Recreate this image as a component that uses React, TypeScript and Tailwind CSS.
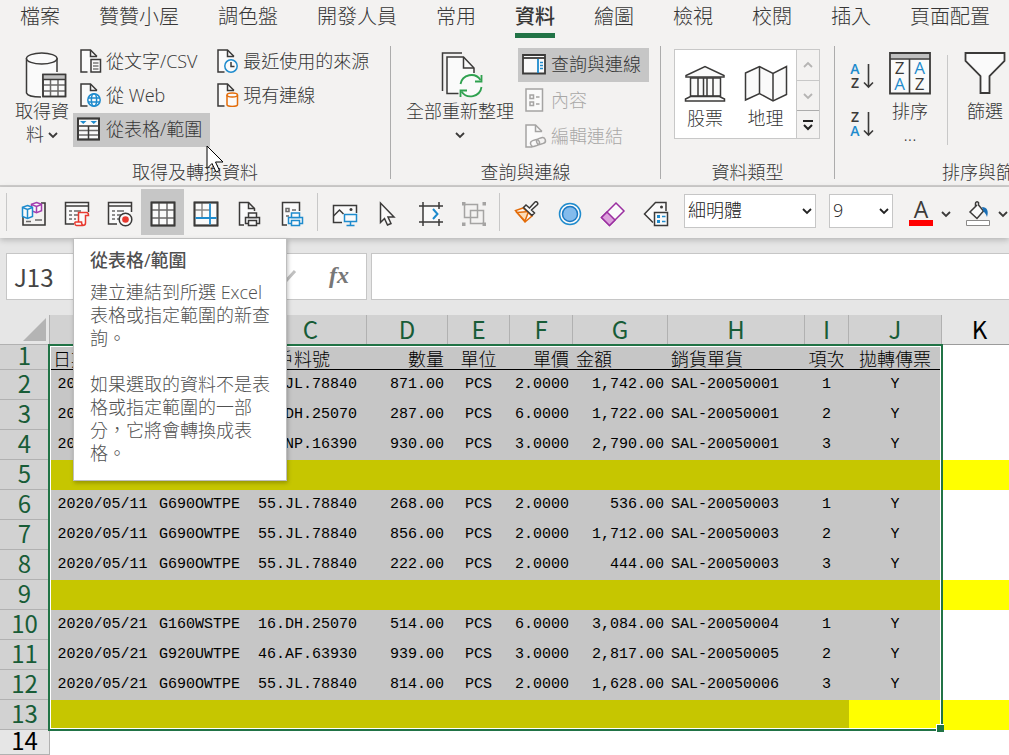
import { type ReactNode } from "react";
import { clsx } from "clsx";

const INK = "#3b3a39";
const BLUE = "#1e8bcd";
const PAPER = "#fafafa";

const tabs = [
  "檔案",
  "贊贊小屋",
  "調色盤",
  "開發人員",
  "常用",
  "資料",
  "繪圖",
  "檢視",
  "校閱",
  "插入",
  "頁面配置",
];

type Align = "left" | "center" | "right";

interface Column {
  key: string;
  width: string;
  align: Align;
  title: string;
  titleAlign?: Align;
}

const columns: Column[] = [
  { key: "A", width: "w-[106px]", align: "center", title: "日期", titleAlign: "left" },
  { key: "B", width: "w-[99px]", align: "left", title: "客戶", titleAlign: "left" },
  { key: "C", width: "w-[112px]", align: "left", title: "客戶料號" },
  { key: "D", width: "w-[81px]", align: "right", title: "數量" },
  { key: "E", width: "w-[62px]", align: "center", title: "單位" },
  { key: "F", width: "w-[63px]", align: "right", title: "單價" },
  { key: "G", width: "w-[95px]", align: "right", title: "金額", titleAlign: "left" },
  { key: "H", width: "w-[137px]", align: "left", title: "銷貨單貨" },
  { key: "I", width: "w-[44px]", align: "center", title: "項次" },
  { key: "J", width: "w-[93px]", align: "center", title: "拋轉傳票" },
];

// null is a blank separator row
const rows: (string[] | null)[] = [
  ["2020/05/01", "G690OWTPE", "55.JL.78840", "871.00", "PCS", "2.0000", "1,742.00", "SAL-20050001", "1", "Y"],
  ["2020/05/01", "G160WSTPE", "16.DH.25070", "287.00", "PCS", "6.0000", "1,722.00", "SAL-20050001", "2", "Y"],
  ["2020/05/01", "G920UWTPE", "46.NP.16390", "930.00", "PCS", "3.0000", "2,790.00", "SAL-20050001", "3", "Y"],
  null,
  ["2020/05/11", "G690OWTPE", "55.JL.78840", "268.00", "PCS", "2.0000", "536.00", "SAL-20050003", "1", "Y"],
  ["2020/05/11", "G690OWTPE", "55.JL.78840", "856.00", "PCS", "2.0000", "1,712.00", "SAL-20050003", "2", "Y"],
  ["2020/05/11", "G690OWTPE", "55.JL.78840", "222.00", "PCS", "2.0000", "444.00", "SAL-20050003", "3", "Y"],
  null,
  ["2020/05/21", "G160WSTPE", "16.DH.25070", "514.00", "PCS", "6.0000", "3,084.00", "SAL-20050004", "1", "Y"],
  ["2020/05/21", "G920UWTPE", "46.AF.63930", "939.00", "PCS", "3.0000", "2,817.00", "SAL-20050005", "2", "Y"],
  ["2020/05/21", "G690OWTPE", "55.JL.78840", "814.00", "PCS", "2.0000", "1,628.00", "SAL-20050006", "3", "Y"],
  null,
];

const alignClass: Record<Align, string> = {
  left: "text-left",
  center: "text-center",
  right: "text-right",
};

/* ---------- icons ---------- */

function Svg({ w, h, children, stroke = INK }: { w: number; h: number; children: ReactNode; stroke?: string }) {
  return (
    <svg
      width={w}
      height={h}
      viewBox={`0 0 ${w} ${h}`}
      fill="none"
      stroke={stroke}
      strokeWidth="1.5"
      className="shrink-0"
      aria-hidden="true"
    >
      {children}
    </svg>
  );
}

function Chevron({ up = false, color = INK }: { up?: boolean; color?: string }) {
  return (
    <Svg w={10} h={8} stroke={color}>
      <path d={up ? "M1 6l4-4 4 4" : "M1 2l4 4 4-4"} strokeWidth="1.8" />
    </Svg>
  );
}

function DocBase({ color = INK }: { color?: string }) {
  return (
    <>
      <path d="M12 22.5H5V1h10l6 6v5" fill={PAPER} stroke="none" />
      <path d="M11.500 23H5V1h9.500l6.500 6.500" stroke={color} />
      <path d="M14.500 1v6.500H21" stroke={color} />
    </>
  );
}

function DocTextIcon() {
  return (
    <Svg w={28} h={24}>
      <DocBase />
      <path d="M15 10.500h9.500V23H15z" fill={PAPER} />
      <path d="M17 14h5.500M17 17h5.500M17 20h5.500" strokeWidth="1" />
    </Svg>
  );
}

function DocWebIcon() {
  return (
    <Svg w={28} h={24}>
      <DocBase />
      <circle cx="18" cy="17" r="6.200" fill={PAPER} stroke={BLUE} />
      <ellipse cx="18" cy="17" rx="2.600" ry="6.200" stroke={BLUE} />
      <path d="M12 15h12M12 19h12" stroke={BLUE} />
    </Svg>
  );
}

function DocClockIcon() {
  return (
    <Svg w={28} h={24}>
      <DocBase />
      <circle cx="18" cy="17" r="6.200" fill={PAPER} stroke={BLUE} />
      <path d="M18 13v4.500h3.500" />
    </Svg>
  );
}

function DocDatabaseIcon() {
  return (
    <Svg w={28} h={24}>
      <DocBase />
      <path d="M14 12v9.500c0 2.500 10.500 2.500 10.500 0V12" fill={PAPER} stroke="#e36c09" />
      <ellipse cx="19.250" cy="12" rx="5.250" ry="2" fill={PAPER} stroke="#e36c09" />
    </Svg>
  );
}

function TableRangeIcon() {
  return (
    <Svg w={28} h={24}>
      <path d="M2 1.500h21v21H2z" fill={PAPER} />
      <path d="M2 13.500h21M2 18h21" stroke="#6b6a69" />
      <path d="M2 9h21M12.500 9v13" />
      <path d="M2 1.500h21v21H2z" strokeWidth="2" />
      <path d="M4 4h6.500l-3.250 3zM14.500 4H21l-3.250 3z" fill={BLUE} stroke="none" />
    </Svg>
  );
}

function QueriesIcon() {
  return (
    <Svg w={28} h={24}>
      <path d="M2 3h22v18.500H2z" fill={PAPER} strokeWidth="1.800" />
      <path d="M2 6h22" strokeWidth="1.800" />
      <path d="M17 7v14" stroke={BLUE} strokeWidth="1.800" />
      <path d="M19 10.500h3M19 13.500h3M19 16.500h3" stroke={BLUE} />
    </Svg>
  );
}

function PropertiesIcon() {
  return (
    <Svg w={28} h={24} stroke="#a5a4a3">
      <path d="M5 1h16.500v22H5z" fill={PAPER} />
      <path d="M9 7h3.500v3.500H9zM9 14h3.500v3.500H9zM15 9h3.500M15 16h3.500" />
    </Svg>
  );
}

function EditLinksIcon() {
  return (
    <Svg w={28} h={24} stroke="#a5a4a3">
      <DocBase color="#a5a4a3" />
      <rect x="9.500" y="16" width="9" height="6" rx="3" transform="rotate(-18 14 19)" />
      <rect x="15.500" y="14" width="9" height="6" rx="3" transform="rotate(-18 20 17)" />
    </Svg>
  );
}

function GetDataIcon() {
  return (
    <Svg w={42} h={46}>
      <path d="M1.500 6v35c1 3 8 4 15 4V22H32V6" fill={PAPER} stroke="none" />
      <path d="M1.500 6v35c1 3 7 4 14.500 4M32 6v14" />
      <ellipse cx="16.750" cy="6.500" rx="15.250" ry="5.500" fill={PAPER} />
      <path d="M18 22.500h22.500v22H18z" fill={PAPER} />
      <path d="M18 23h22v4H18z" fill="#c0c0c0" stroke="none" />
      <path d="M18 33h22.500M18 39h22.500M25.500 27.500v17M33 27.500v17" stroke="#6b6a69" />
      <path d="M18 27.500h22.500M18 22.500h22.500v22H18z" />
    </Svg>
  );
}

function RefreshAllIcon() {
  return (
    <Svg w={42} h={46}>
      <path d="M1.500 39V1H21" />
      <path d="M6 41.500V5h16l10.500 11V24l-14 17.500z" fill={PAPER} stroke="none" />
      <path d="M17.500 41.500H6V5h16.500l10.500 11v5" />
      <path d="M22.500 5v11H33" />
      <circle cx="30" cy="34" r="10.500" fill={PAPER} stroke="none" />
      <path d="M19.500 32a11 11 0 0 1 20-4M40.500 35a11 11 0 0 1-20 4.500" stroke="#2fa14f" strokeWidth="1.800" />
      <path d="M40.500 23v6.500H34M19.500 45v-6.500H26" stroke="#2fa14f" strokeWidth="1.800" />
    </Svg>
  );
}

function StocksIcon() {
  return (
    <Svg w={42} h={38}>
      <path d="M2 12v-1.500L21 1.500l19 9V12z" fill={PAPER} />
      <path d="M6.500 13h30v18h-30z" fill={PAPER} />
      <path d="M14 13v18M19.500 13v18M23 13v18M29 13v18" />
      <path d="M1.500 36v-2l5-2.500h29l5 2.500v2z" fill={PAPER} />
    </Svg>
  );
}

function GeographyIcon() {
  return (
    <Svg w={44} h={38}>
      <path d="M1.500 8L15.500 1.500l13.500 7 13.500-7v28L29 36 15.500 28.500 1.500 35z" fill={PAPER} />
      <path d="M15.500 1.500v27M29 8.500V36" />
    </Svg>
  );
}

function SortArrowIcon({ top, bottom }: { top: string; bottom: string }) {
  return (
    <svg width="28" height="28" viewBox="0 0 28 28" className="overflow-visible" aria-hidden="true">
      <g fontFamily="Open Sans, sans-serif" fontSize="14" fontWeight="600" textAnchor="middle">
        <text x="6" y="12" fill={top === "A" ? BLUE : INK}>{top}</text>
        <text x="6" y="26" fill={bottom === "A" ? BLUE : INK}>{bottom}</text>
      </g>
      <path d="M19.500 2v23M15 20.500l4.500 4.500 4.500-4.500" fill="none" stroke={INK} strokeWidth="1.600" />
    </svg>
  );
}

function SortDialogIcon() {
  return (
    <svg width="42" height="44" viewBox="0 0 42 44" fill="none" aria-hidden="true">
      <path d="M1 1h40v40.500H1z" fill={PAPER} stroke={INK} strokeWidth="1.800" />
      <path d="M2 2h38v4.500H2z" fill="#c0c0c0" />
      <path d="M1 7h40M20.500 7v34" stroke={INK} strokeWidth="1.600" />
      <g fontFamily="Open Sans, sans-serif" fontSize="17" fontWeight="400" textAnchor="middle">
        <text x="10.500" y="22" fill={INK}>Z</text>
        <text x="10.500" y="38" fill={BLUE}>A</text>
        <text x="30.500" y="22" fill={BLUE}>A</text>
        <text x="30.500" y="38" fill={INK}>Z</text>
      </g>
    </svg>
  );
}

function FilterIcon() {
  return (
    <Svg w={42} h={44}>
      <path d="M1.500 1h39v8L25.500 24v17h-9V24L1.500 9z" fill={PAPER} strokeWidth="1.800" />
    </Svg>
  );
}

function CubesIcon() {
  return (
    <Svg w={26} h={26}>
      <path d="M2 14v10h22V2h-4" fill="none" strokeWidth="1.600" />
      <path d="M14 19h7M5 20.500h5" stroke="#6b6a69" />
      <path d="M15.500 1.500l5 1.800v6.500l-5 2-5-2V3.300z" fill={PAPER} stroke="#a33eaf" />
      <path d="M10.500 3.500l5 2 5-2M15.500 5.500v6" stroke="#a33eaf" />
      <path d="M6.500 4.500l5 1.800v9.200l-5 2-5-2V6.300z" fill={PAPER} stroke={BLUE} />
      <path d="M1.500 6.500l5 2 5-2M6.500 8.500v9" stroke={BLUE} />
    </Svg>
  );
}

function FormBase() {
  return (
    <>
      <path d="M10 23H1.500V1.500h23V11" fill={PAPER} />
      <path d="M1.500 5h23" />
      <path d="M5 10h3M10 10h7M5 14h3M10 14h4M5 18h3M10 18h2" stroke="#6b6a69" />
    </>
  );
}

function ScriptIcon() {
  return (
    <Svg w={26} h={26}>
      <FormBase />
      <path
        d="M14.500 21V11.500h8c2 0 2 3 2 3h-3V22c0 2-2 2.500-3 2.500h-6c-2 0-2-3.500-1-3.500h6c0 2 1 3.500 2.500 3.500"
        fill={PAPER}
        stroke="#e8392f"
      />
    </Svg>
  );
}

function RecordIcon() {
  return (
    <Svg w={26} h={26}>
      <FormBase />
      <circle cx="18.500" cy="18.500" r="6.300" fill={PAPER} />
      <circle cx="18.500" cy="18.500" r="3.300" fill="#e8392f" stroke="none" />
    </Svg>
  );
}

function GridIcon() {
  return (
    <Svg w={26} h={26}>
      <path d="M1.500 1.500h23v23h-23z" fill={PAPER} />
      <path d="M2 9h22M2 17h22M9 2v22M17 2v22" stroke="#6b6a69" />
      <path d="M1.500 1.500h23v23h-23z" strokeWidth="1.800" />
    </Svg>
  );
}

function FreezeIcon() {
  return (
    <Svg w={26} h={26}>
      <path d="M1.500 1.500h23v23h-23z" fill={PAPER} />
      <path d="M2 9h15M9 2v15" stroke="#8a8988" />
      <path d="M1.500 1.500h23v23h-23z" strokeWidth="1.800" />
      <path d="M17 2.500v21M2.500 17h21" stroke={BLUE} strokeWidth="1.800" />
    </Svg>
  );
}

function Printer({ color }: { color: string }) {
  return (
    <>
      <path d="M9.500 16.500h14v6h-14z" fill={PAPER} stroke={color} />
      <path d="M12.500 12h8v4.500h-8zM12.500 19.500h8v5h-8z" fill={PAPER} stroke={color} />
    </>
  );
}

function PrintDocIcon() {
  return (
    <Svg w={26} h={26}>
      <path d="M8 24H3.500V1.500h9l6 6V10" fill={PAPER} />
      <path d="M12.500 1.500v6h6" />
      <Printer color={INK} />
    </Svg>
  );
}

function PrintPreviewIcon() {
  return (
    <Svg w={26} h={26}>
      <path d="M8 24H3.500V1.500h17V10" fill={PAPER} />
      <path d="M7 7.500h3v3H7zM13 9h4M7 15h3" stroke="#6b6a69" />
      <Printer color={BLUE} />
    </Svg>
  );
}

function ScreenImageIcon() {
  return (
    <Svg w={26} h={26}>
      <path d="M10 21.500H1.500v-17h23V12" fill={PAPER} />
      <path d="M1.500 15l6-6 4 4" />
      <circle cx="19" cy="8.500" r="1.500" fill={INK} stroke="none" />
      <path d="M12.500 13.500h12v7h-12z" fill={PAPER} stroke={BLUE} />
      <path d="M18.500 20.500v4M14.500 24.500h8" stroke={BLUE} />
    </Svg>
  );
}

function SelectArrowIcon() {
  return (
    <Svg w={26} h={26}>
      <path d="M5.500 2v19.500l4-4 3 6.500 3.500-1.500-3-6.500H19z" fill={PAPER} />
    </Svg>
  );
}

function ArrangeIcon() {
  return (
    <Svg w={26} h={26}>
      <path d="M5 5h16v16H5z" fill={PAPER} stroke="none" />
      <path d="M5 1v24M21 1v7M21 18v7M1 5h24M1 21h24" />
      <path d="M15 8l4.500 5-4.500 5" stroke={BLUE} strokeWidth="2" />
    </Svg>
  );
}

function GroupIcon() {
  return (
    <Svg w={26} h={26} stroke="#a5a4a3">
      <path d="M3.500 3.500h13v13h-13zM9.500 9.500h13v13h-13z" />
      <path
        d="M1 1h3.500v3.500H1zM21.500 1H25v3.500h-3.500zM1 21.500h3.500V25H1zM21.500 21.500H25V25h-3.500z"
        fill="#a5a4a3"
        stroke="none"
      />
    </Svg>
  );
}

function BrushIcon() {
  return (
    <Svg w={26} h={26}>
      <path d="M9 7L1.500 9.500l9.500 11.500L18 15z" fill={PAPER} stroke="#e36c09" />
      <path d="M3 11.500l11.500-1L11 20z" fill="#fbdcb8" stroke="#e36c09" />
      <path d="M9.500 6.500l8.500 8 2.500-2.500-3-3 6-5.500c1-1.500-1-3.500-2.500-2.500l-5.500 6L12 4z" fill={PAPER} />
    </Svg>
  );
}

function CircleIcon() {
  return (
    <Svg w={26} h={26} stroke={BLUE}>
      <circle cx="13" cy="13" r="10.500" fill={PAPER} />
      <circle cx="13" cy="13" r="7.500" fill="#83bbec" stroke="#1a78c2" />
    </Svg>
  );
}

function EraserIcon() {
  return (
    <Svg w={26} h={26} stroke="#9a2fa0">
      <path d="M16 2l8 8-14.500 14.500-8-8z" fill={PAPER} />
      <path d="M7 11l8 8-5.500 5.500-8-8z" fill="#dca0dc" />
    </Svg>
  );
}

function TagIcon() {
  return (
    <Svg w={26} h={26}>
      <path d="M10 21.500L1.500 13 12.500 1.500H23V10" fill={PAPER} />
      <circle cx="18.500" cy="6" r="1.500" fill={INK} stroke="none" />
      <path d="M11.500 11.500h13v13h-13z" fill={PAPER} />
      <path d="M14 14h3v3h-3zM14 19h3v3h-3z" fill={BLUE} stroke="none" />
      <path d="M19 15.500h3.500M19 20.500h3.500" stroke={BLUE} />
    </Svg>
  );
}

/* ---------- ribbon ---------- */

interface RibbonButtonProps {
  icon: ReactNode;
  label: string;
  active?: boolean;
  disabled?: boolean;
}

function RibbonButton({ icon, label, active, disabled }: RibbonButtonProps) {
  return (
    <button
      type="button"
      disabled={disabled}
      className={clsx(
        "flex h-[34px] items-center gap-[2px] pr-2 pb-[2px] pl-[3px] whitespace-nowrap",
        active && "bg-[#c6c6c6]",
        disabled && "text-[#a9a8a7]"
      )}
    >
      {icon}
      {label}
    </button>
  );
}

function RibbonGroup({ label, className, children }: { label: string; className?: string; children: ReactNode }) {
  return (
    <section className={clsx("flex shrink-0 flex-col", className)} aria-label={label}>
      <div className="flex h-[122px] items-start">{children}</div>
      <p className="text-center leading-6 whitespace-nowrap">{label}</p>
    </section>
  );
}

function GroupDivider() {
  return <div className="mt-2 mb-[6px] w-px shrink-0 bg-[#acacac]" />;
}

function Ribbon() {
  return (
    <div className="flex h-[149px] overflow-hidden border-b-2 border-[#cfcecd] text-[18px] leading-[23px]">
      <RibbonGroup label="取得及轉換資料" className="w-[390px]">
        <button type="button" className="ml-[11px] flex w-[62px] flex-col items-center pt-[14px]">
          <span className="mb-[2px] pl-[7px]">
            <GetDataIcon />
          </span>
          <span className="whitespace-nowrap">取得資</span>
          <span className="flex items-center gap-1">
            料 <Chevron />
          </span>
        </button>
        <div className="flex flex-col pt-[7px]">
          <RibbonButton icon={<DocTextIcon />} label="從文字/CSV" />
          <RibbonButton icon={<DocWebIcon />} label="從 Web" />
          <RibbonButton icon={<TableRangeIcon />} label="從表格/範圍" active />
        </div>
        <div className="flex flex-col pt-[7px]">
          <RibbonButton icon={<DocClockIcon />} label="最近使用的來源" />
          <RibbonButton icon={<DocDatabaseIcon />} label="現有連線" />
        </div>
      </RibbonGroup>
      <GroupDivider />
      <RibbonGroup label="查詢與連線" className="w-[269px]">
        <button type="button" className="ml-[15px] flex w-[108px] flex-col items-center pt-[14px]">
          <span className="mb-[2px] pl-1">
            <RefreshAllIcon />
          </span>
          <span className="whitespace-nowrap">全部重新整理</span>
          <span className="flex h-[23px] items-center">
            <Chevron />
          </span>
        </button>
        <div className="ml-1 flex flex-col gap-[2px] pt-[10px]">
          <RibbonButton icon={<QueriesIcon />} label="查詢與連線" active />
          <RibbonButton icon={<PropertiesIcon />} label="內容" disabled />
          <RibbonButton icon={<EditLinksIcon />} label="編輯連結" disabled />
        </div>
      </RibbonGroup>
      <GroupDivider />
      <RibbonGroup label="資料類型" className="w-[173px]">
        <div className="mt-[11px] ml-[13px] flex h-[90px] border border-[#c8c8c8] bg-white">
          <button type="button" className="flex w-[60px] flex-col items-center gap-1 pt-[15px]">
            <StocksIcon />
            股票
          </button>
          <button type="button" className="flex w-[61px] flex-col items-center gap-1 pt-[15px]">
            <GeographyIcon />
            地理
          </button>
          <div className="flex w-[23px] flex-col border-l border-[#c8c8c8] bg-[#f3f2f1]">
            <button type="button" aria-label="上一列" className="grid h-[31px] place-items-center border-b border-[#c8c8c8]">
              <Chevron up color="#b5b4b3" />
            </button>
            <button type="button" aria-label="下一列" className="grid h-[29px] place-items-center">
              <Chevron color="#b5b4b3" />
            </button>
            <button type="button" aria-label="其他" className="grid flex-1 place-items-center border-t border-[#acacac]">
              <Svg w={12} h={12} stroke="#222222">
                <path d="M1 2h10M2 6l4 4 4-4" strokeWidth="2" />
              </Svg>
            </button>
          </div>
        </div>
      </RibbonGroup>
      <GroupDivider />
      <RibbonGroup label="排序與篩選" className="w-[304px]">
        <div className="ml-[14px] flex w-[30px] flex-col gap-5 pt-6">
          <button type="button" aria-label="從 A 到 Z 排序">
            <SortArrowIcon top="A" bottom="Z" />
          </button>
          <button type="button" aria-label="從 Z 到 A 排序">
            <SortArrowIcon top="Z" bottom="A" />
          </button>
        </div>
        <button type="button" className="ml-[9px] flex w-[44px] flex-col items-center pt-[14px]">
          <SortDialogIcon />
          <span className="mt-1">排序</span>
          <span>...</span>
        </button>
        <div className="mt-[17px] ml-[15px] h-[90px] w-px bg-[#c8c8c8]" />
        <button type="button" className="ml-[15px] flex w-[44px] flex-col items-center pt-[14px]">
          <FilterIcon />
          <span className="mt-1">篩選</span>
        </button>
      </RibbonGroup>
    </div>
  );
}

/* ---------- quick access toolbar ---------- */

interface QuickItem {
  label: string;
  icon: ReactNode;
  active?: boolean;
}

const quickAccess: QuickItem[][] = [
  [
    { label: "增益集", icon: <CubesIcon /> },
    { label: "巨集指令碼", icon: <ScriptIcon /> },
    { label: "錄製巨集", icon: <RecordIcon /> },
    { label: "框線", icon: <GridIcon />, active: true },
    { label: "凍結窗格", icon: <FreezeIcon /> },
    { label: "列印", icon: <PrintDocIcon /> },
    { label: "預覽列印", icon: <PrintPreviewIcon /> },
  ],
  [
    { label: "螢幕擷取", icon: <ScreenImageIcon /> },
    { label: "選取物件", icon: <SelectArrowIcon /> },
    { label: "對齊", icon: <ArrangeIcon /> },
    { label: "群組", icon: <GroupIcon /> },
  ],
  [
    { label: "複製格式", icon: <BrushIcon /> },
    { label: "圖形", icon: <CircleIcon /> },
    { label: "清除", icon: <EraserIcon /> },
    { label: "標籤", icon: <TagIcon /> },
  ],
];

function ToolbarSelect({ label, value, className }: { label: string; value: string; className: string }) {
  return (
    <div className={clsx("relative h-[34px] shrink-0", className)}>
      <select
        aria-label={label}
        defaultValue={value}
        className="h-full w-full appearance-none border border-[#c6c6c6] bg-white pb-[2px] pl-[3px] text-[18px] text-[#222222]"
      >
        <option>{value}</option>
      </select>
      <span className="pointer-events-none absolute inset-y-0 right-1 flex items-center">
        <Chevron color="#222222" />
      </span>
    </div>
  );
}

function QuickAccessToolbar() {
  return (
    <div className="relative z-10 flex h-[51px] items-center bg-[#f3f2f1] pb-px pl-[6px] shadow-[0_2px_6px_rgba(0,0,0,0.22)]">
      {quickAccess.map((group, i) => (
        <div key={i} className="flex shrink-0 items-center">
          <div className="mr-[5px] h-[38px] w-px bg-[#c8c8c8]" />
          <div className="mr-1 flex">
            {group.map((item) => (
              <button
                key={item.label}
                type="button"
                aria-label={item.label}
                className={clsx("grid h-[46px] w-[43px] place-items-center pt-1", item.active && "bg-[#c6c6c6]")}
              >
                {item.icon}
              </button>
            ))}
          </div>
        </div>
      ))}
      <ToolbarSelect label="字型" value="細明體" className="mb-[2px] ml-[3px] w-[132px]" />
      <ToolbarSelect label="字型大小" value="9" className="mb-[2px] ml-[13px] w-[64px]" />
      <button type="button" aria-label="字型色彩" className="ml-4 flex shrink-0 items-center gap-2 pt-1">
        <svg width="24" height="26" viewBox="0 0 24 26" className="overflow-visible" aria-hidden="true">
          <text x="12" y="17" fontFamily="Open Sans, sans-serif" fontSize="23" fontWeight="400" textAnchor="middle" fill={INK}>
            A
          </text>
          <path d="M0 19h24v6H0z" fill="#ff0000" />
        </svg>
        <Chevron />
      </button>
      <button type="button" aria-label="填滿色彩" className="ml-[15px] flex shrink-0 items-center gap-2 pt-1">
        <Svg w={24} h={26}>
          <path d="M11 4L4 11l7 6.500 6.500-7.500-5-6V1.500c-2-1.500-3 0-3 1V6" fill={PAPER} />
          <path d="M16 6c5 0 7 4 5 10-1-3-2-4-3.500-5.500z" fill="#1a6fb5" stroke="none" />
          <path d="M.5 19.500h23v5H.5z" fill="#ffffff" stroke="#8a8988" strokeWidth="1" />
        </Svg>
        <Chevron />
      </button>
    </div>
  );
}

function FormulaBar() {
  return (
    <div className="flex h-[77px] items-start gap-1 bg-[#e6e6e6] pt-[15px] pl-[6px]">
      <input
        aria-label="名稱方塊"
        defaultValue="J13"
        className="h-[47px] w-[170px] shrink-0 border border-[#c6c6c6] bg-white px-[7px] font-['Noto_Sans_CJK_TC',sans-serif] text-[24px] font-normal text-[#444444]"
      />
      <div className="flex h-[47px] w-[187px] shrink-0 items-center justify-end border border-[#c6c6c6] bg-white pr-[17px]">
        <button type="button" aria-label="輸入">
          <Svg w={20} h={18} stroke="#c0c0c0">
            <path d="M2 10l5 5L18 3" strokeWidth="3" />
          </Svg>
        </button>
        <button
          type="button"
          aria-label="插入函數"
          className="ml-8 pb-1 font-['Liberation_Serif',serif] text-[24px] font-bold text-[#777777] italic"
        >
          fx
        </button>
      </div>
      <input aria-label="資料編輯列" className="h-[47px] min-w-0 flex-1 border border-r-0 border-[#c6c6c6] bg-white px-2" />
    </div>
  );
}

/* ---------- sheet ---------- */

function RowHeader({ n, selected = true }: { n: number; selected?: boolean }) {
  return (
    <th
      scope="row"
      className={clsx(
        "border-r border-b border-[#b1b1b1] px-0 pt-0 pb-1 text-center font-['Noto_Sans_CJK_TC',sans-serif] text-[24px] leading-5 font-normal",
        selected ? "bg-[#d2d2d2] text-[#185c37]" : "bg-[#e6e6e6] text-black"
      )}
    >
      {n}
    </th>
  );
}

function Sheet() {
  return (
    <div className="relative overflow-hidden bg-white">
      <table className="w-full table-fixed border-separate border-spacing-0">
        <colgroup>
          <col className="w-[50px]" />
          {columns.map((c) => (
            <col key={c.key} className={c.width} />
          ))}
          <col />
        </colgroup>
        <thead className="font-['Noto_Sans_CJK_TC',sans-serif] text-[24px] leading-6">
          <tr className="h-[30px]">
            <td className="border-r border-b border-[#b1b1b1] bg-[#e6e6e6] p-0">
              <svg width="24" height="23" viewBox="0 0 24 23" className="ml-[23px]" aria-hidden="true">
                <path d="M0 23L23 0v23z" fill="#b4b4b4" />
              </svg>
            </td>
            {columns.map((c) => (
              <th
                key={c.key}
                scope="col"
                className="border-r border-b border-[#b1b1b1] bg-[#d2d2d2] px-0 pt-0 pb-[2px] text-center font-normal text-[#185c37]"
              >
                {c.key}
              </th>
            ))}
            <th
              scope="col"
              className="border-b border-[#9b9b9b] bg-[#e6e6e6] pt-0 pr-0 pb-[2px] pl-2 text-center font-normal text-black"
            >
              K
            </th>
          </tr>
        </thead>
        <tbody>
          <tr className="h-[25px] text-[18px] leading-[20px]">
            <RowHeader n={1} />
            {columns.map((c) => (
              <td
                key={c.key}
                className={clsx(
                  "border-b border-black bg-[#c6c6c6] pt-1 pr-1 pb-0 pl-[3px] whitespace-nowrap text-black",
                  alignClass[c.titleAlign ?? c.align]
                )}
              >
                {c.title}
              </td>
            ))}
            <td />
          </tr>
          {rows.map((row, i) => (
            <tr key={i} className="h-[30px] font-['Liberation_Mono',monospace] text-[15px] leading-5 text-black">
              <RowHeader n={i + 2} />
              {row
                ? row.map((value, j) => (
                    <td
                      key={j}
                      className={clsx("bg-[#c6c6c6] py-0 pr-1 pl-[3px] whitespace-nowrap", alignClass[columns[j].align])}
                    >
                      {value}
                    </td>
                  ))
                : columns.map((c) => (
                    <td
                      key={c.key}
                      className={i === rows.length - 1 && c.key === "J" ? "bg-[#ffff00]" : "bg-[#c6c600]"}
                    />
                  ))}
              <td className={row ? "bg-white" : "bg-[#ffff00]"} />
            </tr>
          ))}
          <tr className="h-[25px]">
            <RowHeader n={14} selected={false} />
            <td colSpan={11} />
          </tr>
        </tbody>
      </table>
      {/* selection frame A1:J13 with its fill handle */}
      <div className="pointer-events-none absolute top-[29px] left-[48px] h-[387px] w-[895px] border-2 border-[#217346]">
        <div className="h-full w-full border border-white" />
        <div className="absolute -right-[3px] -bottom-[3px] h-[8px] w-[8px] border-t border-l border-white bg-[#217346]" />
      </div>
    </div>
  );
}

function Tooltip() {
  return (
    <div
      role="tooltip"
      className="absolute top-[238px] left-[73px] z-20 w-[214px] border border-[#bebebe] bg-white px-4 pt-[10px] pb-[15px] text-[18px] leading-[23px] text-[#505050] shadow-[1px_2px_4px_rgba(0,0,0,0.25)]"
    >
      <h2 className="mb-[9px] font-medium">從表格/範圍</h2>
      <p className="whitespace-nowrap">
        建立連結到所選 Excel
        <br />
        表格或指定範圍的新查
        <br />
        詢。
      </p>
      <p className="mt-[23px] whitespace-nowrap">
        如果選取的資料不是表
        <br />
        格或指定範圍的一部
        <br />
        分，它將會轉換成表
        <br />
        格。
      </p>
    </div>
  );
}

function MousePointer() {
  return (
    <svg width="20" height="28" viewBox="0 0 20 28" className="absolute top-[145px] left-[206px] z-20" aria-hidden="true">
      <path d="M1 1v22.500l5-5 4 8.500 3.500-1.500-4-8.500H17z" fill="#ffffff" stroke="#000000" />
    </svg>
  );
}

export default function App() {
  return (
    <div
      lang="zh-Hant"
      className="relative min-h-screen overflow-hidden bg-[#f3f2f1] font-['Open_Sans','Noto_Sans_CJK_TC',sans-serif] font-light text-[#363636]"
    >
      <nav className="flex h-[38px] gap-[39px] overflow-hidden pl-[20px] text-[20px] leading-[34px] whitespace-nowrap">
        {tabs.map((tab) => (
          <button
            key={tab}
            type="button"
            className={clsx(
              "h-[38px] shrink-0 border-b-[5px]",
              tab === "資料" ? "border-[#217346] font-medium" : "border-transparent"
            )}
          >
            {tab}
          </button>
        ))}
      </nav>
      <Ribbon />
      <QuickAccessToolbar />
      <FormulaBar />
      <Sheet />
      <Tooltip />
      <MousePointer />
    </div>
  );
}
